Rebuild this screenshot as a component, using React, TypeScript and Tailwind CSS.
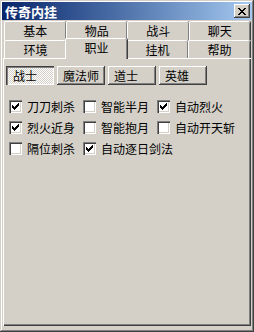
import React from 'react';

const FONT = { fontFamily: '"Noto Sans CJK SC", "Noto Sans", sans-serif' };

const ROW1 = ['基本', '物品', '战斗', '聊天'];
const ROW2 = ['环境', '职业', '挂机', '帮助'];
const CLASSES = ['战士', '魔法师', '道士', '英雄'];

const OPTIONS = [
    [{ label: '刀刀刺杀', on: true }, { label: '智能半月', on: false }, { label: '自动烈火', on: true }],
    [{ label: '烈火近身', on: true }, { label: '智能抱月', on: false }, { label: '自动开天斩', on: false }],
    [{ label: '隔位刺杀', on: false }, { label: '自动逐日剑法', on: true }],
];

// pixel-art glyphs, one string per row
const CHECK = ['......1', '.....11', '1...111', '11.111.', '11111..', '.111...', '..1....'];
const CROSS = ['11....11', '.11..11.', '..1111..', '...11...', '..1111..', '.11..11.', '11....11'];

const Pixels = ({ rows }: { rows: string[] }) => (
    <svg width={rows[0].length} height={rows.length} shapeRendering="crispEdges">
        {rows.map((r, y) =>
            r.split('').map((c, x) => (c === '1' ? <rect key={`${x}-${y}`} x={x} y={y} width={1} height={1} fill="#000" /> : null))
        )}
    </svg>
);

const Tab = ({ label, active }: { label: string; active?: boolean }) => {
    if (active) {
        return (
            <div className="relative z-10 -mx-[1px] -mt-[2px] h-[21px] flex-1 rounded-t-[2px] border-l border-t border-white bg-[#d4d0c8] shadow-[inset_-1px_0_#808080,1px_0_#404040] flex justify-center pt-[1px] text-[12px] leading-[16px] text-black">
                {label}
            </div>
        );
    }
    return (
        <div className="h-full flex-1 rounded-t-[2px] border-l border-t border-white shadow-[inset_-1px_0_#808080,1px_0_#404040] flex items-center justify-center text-[12px] text-black">
            {label}
        </div>
    );
};

const CheckBox = ({ label, on }: { label: string; on: boolean }) => (
    <div className="flex w-[74px] items-center">
        <div className="flex h-[13px] w-[13px] shrink-0 items-center justify-center bg-white shadow-[inset_1px_1px_#808080,inset_2px_2px_#404040,inset_-1px_-1px_#ffffff,inset_-2px_-2px_#d4d0c8]">
            {on && <Pixels rows={CHECK} />}
        </div>
        <span className="ml-[5px] whitespace-nowrap text-[12px] text-black">{label}</span>
    </div>
);

export default function App() {
    return (
        <div
            style={FONT}
            className="flex h-[332px] w-[254px] flex-col bg-[#d4d0c8] p-[2px] shadow-[inset_-1px_-1px_#404040,inset_1px_1px_#d4d0c8,inset_-2px_-2px_#808080,inset_2px_2px_#ffffff]"
        >
            {/* title bar */}
            <div className="flex h-[18px] shrink-0 items-center justify-between bg-gradient-to-r from-[#0a246a] to-[#a6caf0] pl-[3px] pr-[2px]">
                <span className="text-[13px] font-bold leading-none text-white">传奇内挂</span>
                <div className="flex h-[14px] w-[16px] items-center justify-center bg-[#d4d0c8] shadow-[inset_-1px_-1px_#404040,inset_1px_1px_#ffffff,inset_-2px_-2px_#808080]">
                    <Pixels rows={CROSS} />
                </div>
            </div>

            {/* tabs */}
            <div className="mx-[1px] mt-[1px] flex flex-1 flex-col">
                <div className="flex h-[19px] pl-[1px] pr-[1px]">
                    {ROW1.map((t) => (
                        <Tab key={t} label={t} />
                    ))}
                </div>
                <div className="flex h-[18px] pl-[1px] pr-[1px]">
                    {ROW2.map((t) => (
                        <Tab key={t} label={t} active={t === '职业'} />
                    ))}
                </div>

                {/* page */}
                <div className="mb-[4px] flex flex-1 flex-col border-l border-t border-white pl-[2px] pt-[7px] shadow-[inset_-1px_-1px_#404040,inset_-2px_-2px_#808080]">
                    <div className="flex gap-[3px]">
                        {CLASSES.map((c, i) =>
                            i === 0 ? (
                                <div
                                    key={c}
                                    className="flex h-[19px] w-[48px] items-center bg-[image:repeating-conic-gradient(#ffffff_0_25%,#d4d0c8_0_50%)] bg-[length:2px_2px] pl-[7px] pt-[1px] text-[12px] text-black shadow-[inset_1px_1px_#404040,inset_2px_2px_#808080,inset_-1px_-1px_#ffffff]"
                                >
                                    {c}
                                </div>
                            ) : (
                                <div
                                    key={c}
                                    className="flex h-[19px] w-[48px] items-center bg-[#d4d0c8] pl-[6px] text-[12px] text-black shadow-[inset_-1px_-1px_#404040,inset_1px_1px_#ffffff,inset_-2px_-2px_#808080]"
                                >
                                    {c}
                                </div>
                            )
                        )}
                    </div>

                    <div className="ml-[3px] mt-[11px] flex flex-col">
                        {OPTIONS.map((row, i) => (
                            <div key={i} className="flex h-[21px] items-center">
                                {row.map((o) => (
                                    <CheckBox key={o.label} label={o.label} on={o.on} />
                                ))}
                            </div>
                        ))}
                    </div>
                </div>
            </div>
        </div>
    );
}
